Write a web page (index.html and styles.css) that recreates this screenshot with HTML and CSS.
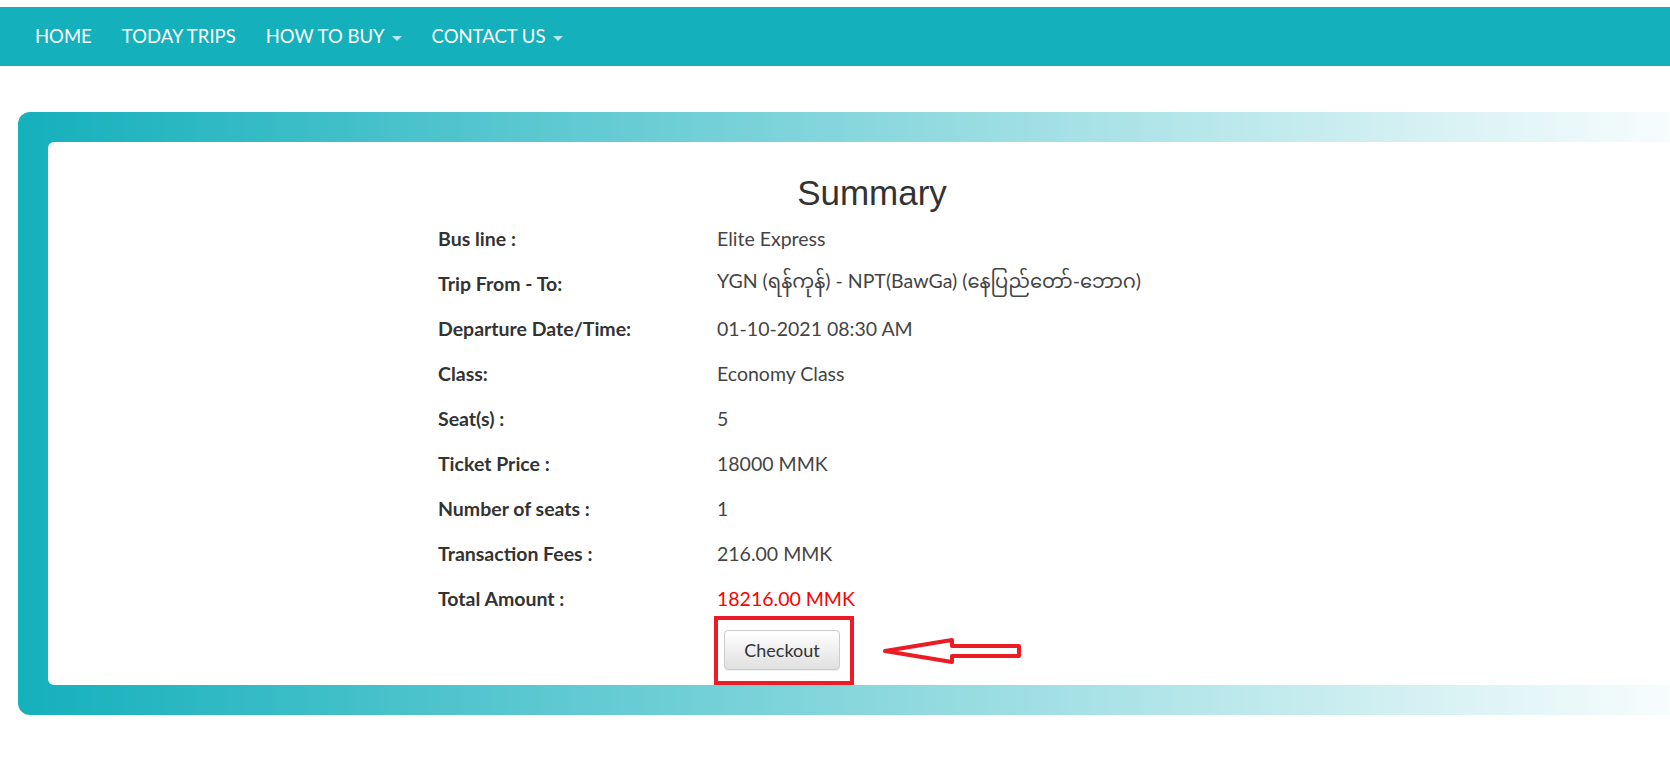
FILE: index.html
```html
<!DOCTYPE html>
<html>
<head>
    <title>Summary</title>
    <link rel="stylesheet" href="styles.css">
</head>
<body>
    <nav class="navbar">
        <ul class="nav-links">
            <li><a href="#">HOME</a></li>
            <li><a href="#">TODAY TRIPS</a></li>
            <li><a href="#">HOW TO BUY <span class="caret"></span></a></li>
            <li><a href="#">CONTACT US <span class="caret"></span></a></li>
        </ul>
    </nav>

    <div class="card">
        <div class="card-body">
            <h2 class="title">Summary</h2>

            <div class="summary">
                <div class="row"><span class="label">Bus line :</span><span class="value">Elite Express</span></div>
                <div class="row"><span class="label">Trip From - To:</span><span class="value">YGN (ရန်ကုန်) - NPT(BawGa) (နေပြည်တော်-ဘောဂ)</span></div>
                <div class="row"><span class="label">Departure Date/Time:</span><span class="value">01-10-2021 08:30 AM</span></div>
                <div class="row"><span class="label">Class:</span><span class="value">Economy Class</span></div>
                <div class="row"><span class="label">Seat(s) :</span><span class="value">5</span></div>
                <div class="row"><span class="label">Ticket Price :</span><span class="value">18000 MMK</span></div>
                <div class="row"><span class="label">Number of seats :</span><span class="value">1</span></div>
                <div class="row"><span class="label">Transaction Fees :</span><span class="value">216.00 MMK</span></div>
                <div class="row"><span class="label">Total Amount :</span><span class="value total">18216.00 MMK</span></div>

                <div class="row checkout-row">
                    <span></span>
                    <div class="checkout-wrap">
                        <div class="mark-box">
                            <button class="btn-checkout">Checkout</button>
                        </div>
                        <svg class="arrow" width="142" height="30" viewBox="0 0 142 30">
                            <polygon points="3,15 70,4 70,10 137,10 137,20 70,20 70,26"
                                     fill="none" stroke="#ed1c24" stroke-width="4" stroke-linejoin="round"/>
                        </svg>
                    </div>
                </div>
            </div>
        </div>
    </div>
</body>
</html>
```

FILE: styles.css
```css
body {
    margin: 0;
    padding-top: 7px;
    overflow-x: hidden;
    font-family: Lato, "Noto Sans", "Noto Sans Myanmar", sans-serif;
    color: #444;
    background-color: #fff;
}

.navbar {
    background-color: #14b0bc;
    height: 59px;
    display: flex;
    align-items: center;
}

.nav-links {
    list-style-type: none;
    margin: 0;
    padding: 0 0 0 20px;
    display: flex;
}

.nav-links a {
    display: block;
    padding: 0 15px;
    color: #fff;
    text-decoration: none;
    font-size: 18.5px;
    line-height: 59px;
}

.caret {
    display: inline-block;
    width: 0;
    height: 0;
    margin-left: 3px;
    vertical-align: middle;
    border-top: 5px solid rgba(255, 255, 255, 0.7);
    border-left: 5px solid transparent;
    border-right: 5px solid transparent;
}

.card {
    margin: 46px 0 0 18px;
    width: 1708px;
    box-sizing: border-box;
    padding: 30px;
    border-radius: 12px;
    background: linear-gradient(to right, #14b0bc, #ffffff);
}

.card-body {
    background-color: #fff;
    border-radius: 6px;
    padding-top: 27px;
}

.title {
    margin: 0;
    text-align: center;
    font-family: "Liberation Sans", Arial, sans-serif;
    font-weight: normal;
    font-size: 35px;
    line-height: 47px;
    color: #333;
}

.summary {
    width: 868px;
    margin: 0 auto;
}

.row {
    display: grid;
    grid-template-columns: 279px 1fr;
    align-items: center;
    height: 45px;
}

.label {
    font-size: 19.5px;
    font-weight: bold;
    color: #333;
}

.value {
    font-size: 19.5px;
    color: #444;
}

.total {
    color: #f00;
}

.checkout-row {
    height: auto;
    margin-top: -5px;
}

.checkout-wrap {
    display: flex;
    align-items: center;
    margin-left: -3px;
}

.mark-box {
    border: 4px solid #ed1c24;
    padding: 10px 10px 11px 6px;
}

.btn-checkout {
    display: block;
    width: 116px;
    height: 40px;
    font-family: Lato, "Noto Sans", sans-serif;
    font-size: 18px;
    color: #333;
    border: 1px solid #ccc;
    border-radius: 4px;
    background: linear-gradient(to bottom, #fff, #e0e0e0);
    box-shadow: inset 0 1px 0 rgba(255, 255, 255, 0.15), 0 1px 1px rgba(0, 0, 0, 0.075);
    cursor: pointer;
}

.arrow {
    margin-left: 28px;
}
```
